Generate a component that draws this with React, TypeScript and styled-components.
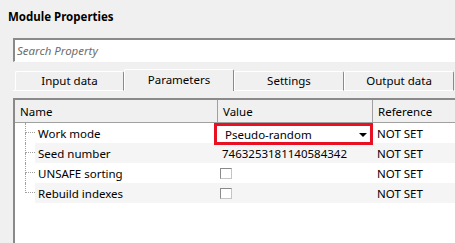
import styled, { createGlobalStyle } from 'styled-components';

const GlobalStyle = createGlobalStyle`
  html, body {
    margin: 0;
    padding: 0;
    background: #f0f0f0;
  }
  body {
    font-family: "Segoe UI", "Noto Sans", sans-serif;
    font-size: 11.5px;
    color: #000;
    overflow: hidden;
  }
`;

const Window = styled.div`
  width: 455px;
  height: 243px;
  overflow: hidden;
  display: flex;
  flex-direction: column;
`;

const Title = styled.div`
  height: 38px;
  box-sizing: border-box;
  padding: 9px 0 0 8px;
  font-weight: bold;
  line-height: 16px;
`;

const Panel = styled.div`
  flex: 1;
  display: flex;
  flex-direction: column;
  padding-left: 13px;
  min-height: 0;
`;

const SearchBox = styled.div`
  height: 24px;
  box-sizing: border-box;
  background: #fff;
  border-top: 2px solid #8a8a8a;
  border-left: 2px solid #8a8a8a;
  border-bottom: 1px solid #fff;
  padding-left: 2px;
  display: flex;
  align-items: center;
  font-style: italic;
  color: #6d6d6d;
`;

const TabRow = styled.div`
  margin-top: 7px;
  height: 22px;
  display: flex;
  align-items: flex-end;
  padding-left: 2px;
  box-shadow: inset 0 -1px 0 #fff;
`;

const Tab = styled.div<{ $active?: boolean; $w: number }>`
  width: ${(p) => p.$w}px;
  height: ${(p) => (p.$active ? 22 : 20)}px;
  box-sizing: border-box;
  background: #f0f0f0;
  border-top: 1px solid #fff;
  border-left: 1px solid #fff;
  border-right: 1px solid #8a8a8a;
  border-bottom: ${(p) => (p.$active ? 'none' : '1px solid #fff')};
  border-radius: 2px 2px 0 0;
  display: flex;
  justify-content: center;
  align-items: ${(p) => (p.$active ? 'flex-start' : 'center')};
  padding-top: ${(p) => (p.$active ? 2 : 0)}px;
  line-height: 16px;
`;

const Table = styled.div`
  margin-top: 7px;
  flex: 1;
  background: #fff;
  border-top: 2px solid #8a8a8a;
  border-left: 2px solid #8a8a8a;
  display: flex;
  flex-direction: column;
`;

const Header = styled.div`
  height: 23px;
  box-sizing: border-box;
  background: #f0f0f0;
  border-bottom: 1px solid #a0a0a0;
  display: grid;
  grid-template-columns: 203px 155px 1fr;
`;

const HeadCell = styled.div<{ $sep?: boolean }>`
  box-sizing: border-box;
  padding-left: 5px;
  display: flex;
  align-items: center;
  border-right: ${(p) => (p.$sep ? '1px solid #a0a0a0' : 'none')};
`;

const Row = styled.div`
  height: 20px;
  display: flex;
`;

const Gutter = styled.div`
  width: 20px;
  flex: none;
  display: grid;
  grid-template-columns: 11px 9px;
  grid-template-rows: 10px 10px;
`;

const Branch = styled.div<{ $v?: boolean; $h?: boolean }>`
  box-sizing: border-box;
  border-right: ${(p) => (p.$v ? '1px dotted #a0a0a0' : 'none')};
  border-bottom: ${(p) => (p.$h ? '1px dotted #a0a0a0' : 'none')};
`;

const RowBody = styled.div<{ $alt?: boolean }>`
  flex: 1;
  display: grid;
  grid-template-columns: 183px 155px 1fr;
  background: ${(p) => (p.$alt ? '#f5f5f5' : '#fff')};
`;

const Cell = styled.div<{ $pad: number }>`
  position: relative;
  min-width: 0;
  box-sizing: border-box;
  padding-left: ${(p) => p.$pad}px;
  display: flex;
  align-items: center;
  white-space: nowrap;
`;

const Combo = styled.div`
  flex: 1;
  align-self: stretch;
  display: flex;
  align-items: center;
  justify-content: space-between;
  padding-left: 7px;
  padding-right: 6px;
  padding-top: 2px;
  background: #fff;
`;

const Arrow = styled.span`
  width: 0;
  height: 0;
  border-left: 4px solid transparent;
  border-right: 4px solid transparent;
  border-top: 4px solid #000;
  margin-top: 1px;
`;

const Highlight = styled.div`
  position: absolute;
  left: -4px;
  top: 0;
  right: 0;
  height: 22px;
  box-sizing: border-box;
  border: 3px solid #e81123;
  pointer-events: none;
`;

const Check = styled.span`
  width: 12px;
  height: 11px;
  box-sizing: border-box;
  background: #fff;
  border: 1px solid;
  border-color: #8a8a8a #c4c4c4 #c4c4c4 #8a8a8a;
`;

type Prop = { name: string; value: 'combo' | 'check' | string };

const props: Prop[] = [
  { name: 'Work mode', value: 'combo' },
  { name: 'Seed number', value: '7463253181140584342' },
  { name: 'UNSAFE sorting', value: 'check' },
  { name: 'Rebuild indexes', value: 'check' },
];

const tabs = [
  { label: 'Input data', w: 109 },
  { label: 'Parameters', w: 110, active: true },
  { label: 'Settings', w: 110 },
  { label: 'Output data', w: 110 },
];

const App = () => (
  <Window>
    <GlobalStyle />
    <Title>Module Properties</Title>
    <Panel>
      <SearchBox>Search Property</SearchBox>
      <TabRow>
        {tabs.map((t) => (
          <Tab key={t.label} $w={t.w} $active={t.active}>{t.label}</Tab>
        ))}
      </TabRow>
      <Table>
        <Header>
          <HeadCell $sep>Name</HeadCell>
          <HeadCell $sep>Value</HeadCell>
          <HeadCell>Reference</HeadCell>
        </Header>
        {props.map((p, i) => {
          const last = i === props.length - 1;
          return (
            <Row key={p.name}>
              <Gutter>
                <Branch $v />
                <Branch $h />
                <Branch $v={!last} />
                <Branch />
              </Gutter>
              <RowBody $alt={i % 2 === 1}>
                <Cell $pad={3}>{p.name}</Cell>
                {p.value === 'combo' ? (
                  <Cell $pad={0}>
                    <Combo>Pseudo-random<Arrow /></Combo>
                    <Highlight />
                  </Cell>
                ) : (
                  <Cell $pad={p.value === 'check' ? 2 : 4}>
                    {p.value === 'check' ? <Check /> : p.value}
                  </Cell>
                )}
                <Cell $pad={4}>NOT SET</Cell>
              </RowBody>
            </Row>
          );
        })}
      </Table>
    </Panel>
  </Window>
);

export default App;
